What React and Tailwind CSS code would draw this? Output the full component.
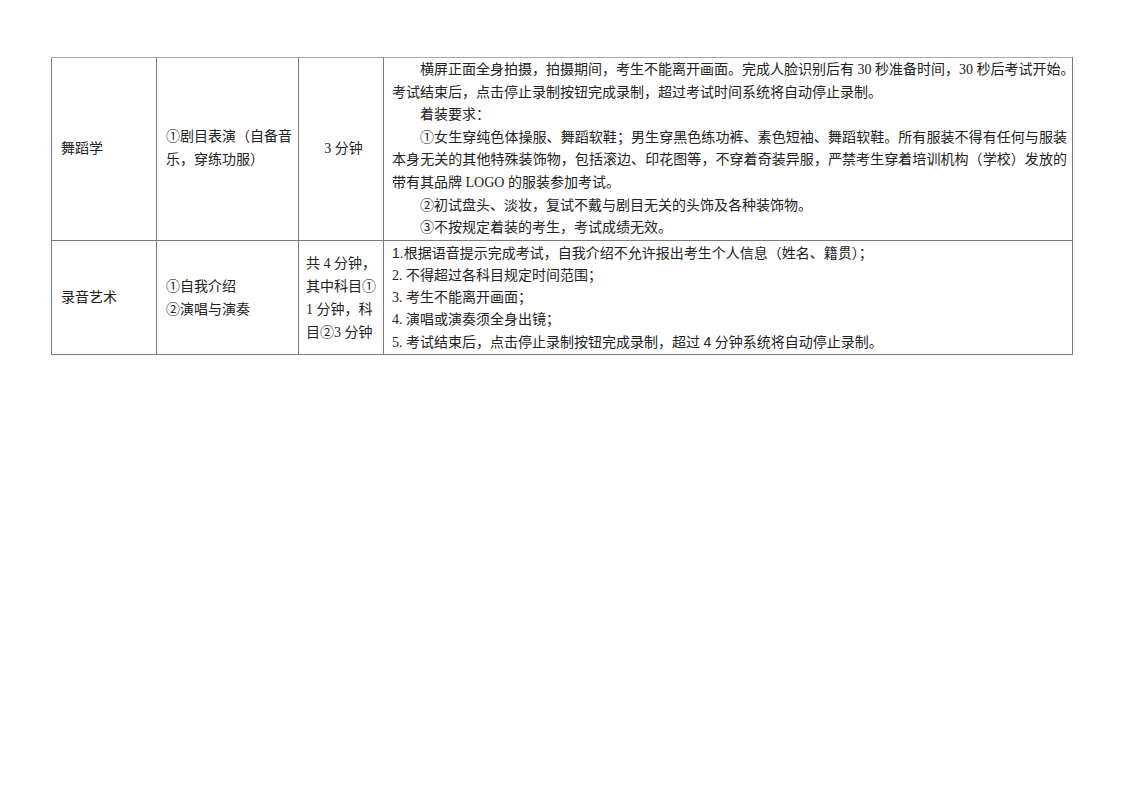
import React from 'react';

const serif = { fontFamily: '"Liberation Serif", "Noto Sans CJK SC", serif' };

function Line({ children, indent, full }) {
  return (
    <div
      className={`whitespace-nowrap ${indent ? 'pl-[28px]' : ''} ${full ? 'text-justify [text-align-last:justify]' : ''}`}
    >
      {children}
    </div>
  );
}

const Num = ({ children }) => (
  <span className="font-['Liberation_Sans',sans-serif]">{children}</span>
);

export default function App() {
  const cell = 'border border-[#7a7a7a] align-middle pl-[9px] pr-[4px] py-0';
  const top = 'border-t-[#a8a8a8]';
  return (
    <div className="min-h-[794px] w-[1123px] bg-white pl-[51px] pt-[57px] text-[14px] leading-[22.6px] text-[#222]" style={serif}>
      <table className="w-[1021px] table-fixed border-collapse">
        <colgroup>
          <col className="w-[105px]" />
          <col className="w-[142px]" />
          <col className="w-[85px]" />
          <col className="w-[689px]" />
        </colgroup>
        <tbody>
          <tr className="h-[183px]">
            <td className={`${cell} ${top}`}>舞蹈学</td>
            <td className={`${cell} ${top}`}>
              <div className="whitespace-nowrap">①剧目表演（自备音</div>
              <div className="whitespace-nowrap">乐，穿练功服）</div>
            </td>
            <td className={`${cell} ${top} text-center`}>3 分钟</td>
            <td className={`border border-[#7a7a7a] ${top} align-top pl-[8px] pr-[5px] pt-[1px]`}>
              <Line indent full>横屏正面全身拍摄，拍摄期间，考生不能离开画面。完成人脸识别后有 30 秒准备时间，30 秒后考试开始。</Line>
              <Line>考试结束后，点击停止录制按钮完成录制，超过考试时间系统将自动停止录制。</Line>
              <Line indent>着装要求：</Line>
              <Line indent full>①女生穿纯色体操服、舞蹈软鞋；男生穿黑色练功裤、素色短袖、舞蹈软鞋。所有服装不得有任何与服装</Line>
              <Line full>本身无关的其他特殊装饰物，包括滚边、印花图等，不穿着奇装异服，严禁考生穿着培训机构（学校）发放的</Line>
              <Line>带有其品牌 LOGO 的服装参加考试。</Line>
              <Line indent>②初试盘头、淡妆，复试不戴与剧目无关的头饰及各种装饰物。</Line>
              <Line indent>③不按规定着装的考生，考试成绩无效。</Line>
            </td>
          </tr>
          <tr className="h-[112px] leading-[22px]">
            <td className={cell}>录音艺术</td>
            <td className={`${cell} leading-[23px]`}>
              <div>①自我介绍</div>
              <div>②演唱与演奏</div>
            </td>
            <td className="border border-[#7a7a7a] align-middle pl-[7px] pr-[2px] py-0 leading-[23px]">
              <div className="whitespace-nowrap">共 4 分钟，</div>
              <div className="whitespace-nowrap">其中科目①</div>
              <div className="whitespace-nowrap">1 分钟，科</div>
              <div className="whitespace-nowrap">目②3 分钟</div>
            </td>
            <td className="border border-[#7a7a7a] align-top pl-[8px] pr-[5px] pt-[1px]">
              <Line><Num>1.</Num>根据语音提示完成考试，自我介绍不允许报出考生个人信息（姓名、籍贯）；</Line>
              <Line>2. 不得超过各科目规定时间范围；</Line>
              <Line>3. 考生不能离开画面；</Line>
              <Line>4. 演唱或演奏须全身出镜；</Line>
              <Line>5. 考试结束后，点击停止录制按钮完成录制，超过 <Num>4</Num> 分钟系统将自动停止录制。</Line>
            </td>
          </tr>
        </tbody>
      </table>
    </div>
  );
}
